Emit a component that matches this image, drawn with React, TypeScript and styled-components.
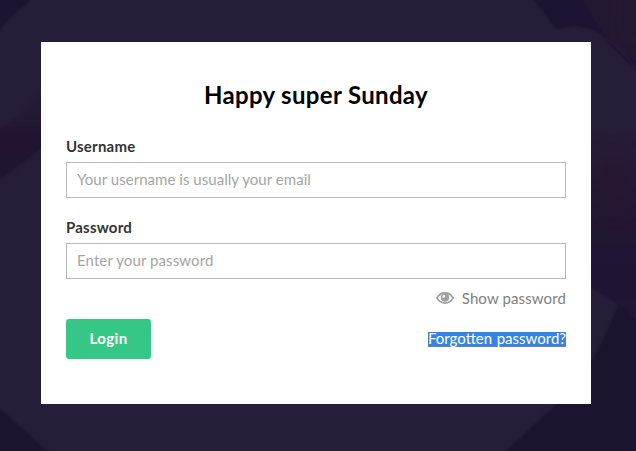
import React from "react";
import styled, { createGlobalStyle } from "styled-components";

const GlobalStyle = createGlobalStyle`
  * { box-sizing: border-box; }
  html, body { margin: 0; height: 100%; }
  body { overflow: hidden; }
`;

const Page = styled.main`
  position: relative;
  width: 636px;
  height: 451px;
  padding: 42px 45px 0 41px;
  overflow: hidden;
  background: #261d3a;
  font-family: Lato, "Open Sans", sans-serif;
  font-size: 15px;
  letter-spacing: 0.05px;
`;

const Backdrop = styled.svg`
  position: absolute;
  inset: 0;
`;

const Card = styled.form`
  position: relative;
  display: flex;
  flex-direction: column;
  width: 550px;
  height: 362px;
  padding: 38px 25px 0;
  background: #fff;
`;

const Title = styled.h1`
  margin: 0 0 25px;
  font-size: 24px;
  font-weight: 700;
  letter-spacing: 0.33px;
  line-height: 30px;
  text-align: center;
  color: #000;
`;

const Field = styled.div`
  display: flex;
  flex-direction: column;
  height: 63px;
  margin-bottom: 18px;

  &:nth-of-type(2) { margin-bottom: 9px; }
`;

const Label = styled.label`
  height: 27px;
  font-weight: 700;
  letter-spacing: 0.22px;
  line-height: 22px;
  color: #333;
`;

const Input = styled.input`
  width: 100%;
  height: 36px;
  padding: 0 10px 3px;
  border: 1px solid #b8b8bb;
  border-radius: 0;
  outline: none;
  font: inherit;
  letter-spacing: 0.04px;
  color: #333;

  &[type="password"] { letter-spacing: 0.1px; }
  &::placeholder { color: #a5a5a5; opacity: 1; }
`;

const ShowPassword = styled.div`
  display: flex;
  align-items: center;
  justify-content: flex-end;
  gap: 8px;
  height: 20px;
  letter-spacing: 0.12px;
  line-height: 20px;
  color: #808080;
`;

const Actions = styled.div`
  display: flex;
  align-items: center;
  justify-content: space-between;
  height: 40px;
  margin-top: 11px;
`;

const LoginButton = styled.button`
  width: 85px;
  height: 40px;
  padding: 0 0 2px;
  border: 0;
  border-radius: 3px;
  background: #36c786;
  font: inherit;
  font-weight: 700;
  letter-spacing: 0.4px;
  color: #fff;
`;

const ForgottenLink = styled.a`
  height: 15px;
  border-bottom: 1px solid #6f7f96;
  background: #3583e4;
  font-variant-ligatures: common-ligatures;
  letter-spacing: 0;
  word-spacing: 0.7px;
  line-height: 12px;
  color: #fff;
`;

const EyeIcon = () => (
  <svg width="18" height="12" viewBox="0 0 18 12" aria-hidden="true">
    <path d="M.8 6C3.1 2.5 5.8.9 9 .9S14.9 2.5 17.2 6C14.9 9.5 12.2 11.1 9 11.1S3.1 9.5.8 6Z" fill="none" stroke="#a0a0a0" strokeWidth="1.6" />
    <circle cx="9" cy="5.5" r="4.3" fill="#a0a0a0" />
    <path d="M6.4 5.2C6.4 3.6 7.2 2.8 8.6 2.7L9.2 4.7 8 6Z" fill="#fff" />
  </svg>
);

const Background = () => (
  <Backdrop width="636" height="451" viewBox="0 0 636 451" aria-hidden="true">
    <defs>
      <filter id="soft" x="-20%" y="-20%" width="140%" height="140%" colorInterpolationFilters="sRGB">
        <feGaussianBlur stdDeviation="1.3" />
      </filter>
      <filter id="haze" x="-50%" y="-50%" width="200%" height="200%" colorInterpolationFilters="sRGB">
        <feGaussianBlur stdDeviation="9" />
      </filter>
      <linearGradient id="fold" x1="0" y1="0" x2="0" y2="1">
        <stop offset="0" stopColor="#261b38" stopOpacity="0" />
        <stop offset=".55" stopColor="#211433" />
        <stop offset="1" stopColor="#201534" />
      </linearGradient>
      <linearGradient id="right" x1="0" y1="0" x2="0" y2="1">
        <stop offset="0" stopColor="#261d3a" />
        <stop offset=".4" stopColor="#231735" />
        <stop offset=".75" stopColor="#1f1434" />
        <stop offset="1" stopColor="#211635" />
      </linearGradient>
    </defs>
    <g filter="url(#soft)">
      <path d="M-9-9H38L28 2Q10 17-1 30L-9 36Z" fill="#1c1231" />
      <path d="M-9 407-1 408Q23 429 49 453L50 465H-9Z" fill="#1c1331" />
      <path d="M530-5H645V75L636 70 615 50C600 31 575 20 558 31Z" fill="#1c1231" />
      <path d="M580-5H645V68L611 43Q594 23 580-5Z" fill="#231832" />
      <path d="M622-5Q615 22 624 43M616-5Q610 28 615 45L640 39" fill="none" stroke="#271a35" strokeWidth="1.4" />
      <path d="M558 31Q577 22 598 34T630 61L645 79" fill="none" stroke="#291e3b" strokeWidth="2" />
      <path d="M-5 130Q31 114 45 80V145L38 151-5 184Z" fill="url(#fold)" />
      <path d="M580 135H645V330L617 304 591 287 580 280Z" fill="url(#right)" />
      <path d="M619 304 645 329V465H504L506 451 557 404 591 362Q606 335 619 304Z" fill="#1c1330" />
    </g>
    <ellipse cx="614" cy="182" rx="13" ry="30" fill="#291731" opacity=".7" filter="url(#haze)" />
  </Backdrop>
);

export default function App() {
  return (
    <>
      <GlobalStyle />
      <Page>
        <Background />
        <Card onSubmit={(event) => event.preventDefault()}>
          <Title>Happy super Sunday</Title>
          <Field>
            <Label htmlFor="username">Username</Label>
            <Input id="username" placeholder="Your username is usually your email" />
          </Field>
          <Field>
            <Label htmlFor="password">Password</Label>
            <Input id="password" type="password" placeholder="Enter your password" />
          </Field>
          <ShowPassword><EyeIcon />Show password</ShowPassword>
          <Actions>
            <LoginButton type="submit">Login</LoginButton>
            <ForgottenLink>Forgotten password?</ForgottenLink>
          </Actions>
        </Card>
      </Page>
    </>
  );
}
